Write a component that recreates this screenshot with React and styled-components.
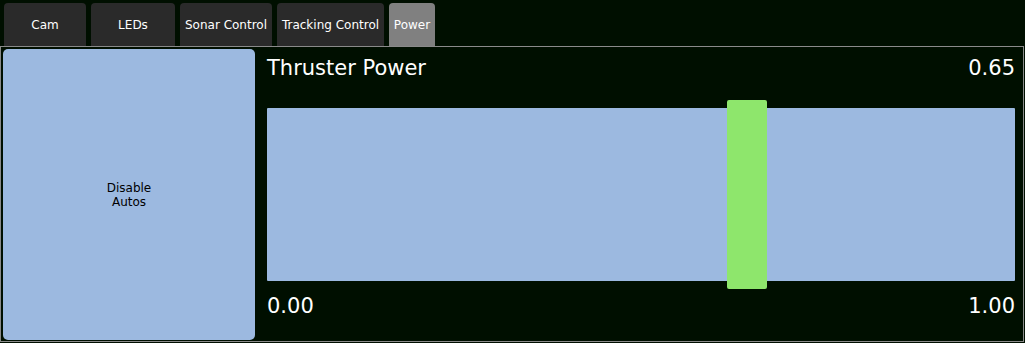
import React, { useState } from "react";
import styled, { createGlobalStyle } from "styled-components";

const GlobalStyle = createGlobalStyle`
  html, body {
    margin: 0;
    padding: 0;
    background: #000f00;
    font-family: "DejaVu Sans", "Liberation Sans", sans-serif;
  }
`;

const Page = styled.div`
  width: 1025px;
  height: 343px;
  display: flex;
  flex-direction: column;
  background: #000f00;
`;

const TabBar = styled.div`
  display: flex;
  gap: 5px;
  padding: 3px 0 0 4px;
  height: 43px;
`;

const Tab = styled.button`
  width: ${(p) => p.$width}px;
  height: 43px;
  border: 0;
  border-radius: 4px 4px 0 0;
  padding: 0 4px;
  background: ${(p) => (p.$active ? "#808080" : "#2a2a2a")};
  color: #ffffff;
  font-family: "DejaVu Sans", sans-serif;
  font-size: 12px;
  white-space: nowrap;
  cursor: pointer;
`;

const Panel = styled.div`
  width: 1024px;
  height: 296px;
  box-sizing: border-box;
  border: 1px solid #8a8a8a;
  padding: 2px;
  display: flex;
`;

const AutoButton = styled.button`
  width: 252px;
  height: 291px;
  border: 0;
  border-radius: 5px;
  background: #9cb9e0;
  color: #000;
  font-family: "DejaVu Sans", sans-serif;
  font-size: 12px;
  line-height: 14px;
  flex-shrink: 0;
`;

const Control = styled.div`
  flex: 1;
  display: flex;
  flex-direction: column;
  padding: 7px 6px 0 12px;
`;

const Row = styled.div`
  display: flex;
  justify-content: space-between;
  color: #ffffff;
  font-size: 21px;
  line-height: 24px;
  margin-top: ${(p) => p.$top || 0}px;
`;

const Slider = styled.div`
  position: relative;
  margin-top: 20px;
  height: 189px;
  display: flex;
  align-items: center;
`;

const Track = styled.div`
  width: 100%;
  height: 173px;
  background: #9cb9e0;
  border-radius: 1px;
`;

const Handle = styled.div`
  position: absolute;
  top: 0;
  width: 40px;
  height: 189px;
  background: #8ee66c;
  border-radius: 2px;
`;

const tabs = [
  { label: "Cam", width: 82 },
  { label: "LEDs", width: 84 },
  { label: "Sonar Control", width: 92 },
  { label: "Tracking Control", width: 107 },
  { label: "Power", width: 46 },
];

export default function App() {
  const [active, setActive] = useState("Power");
  const value = 0.65;

  return (
    <Page>
      <GlobalStyle />
      <TabBar>
        {tabs.map((t) => (
          <Tab
            key={t.label}
            $width={t.width}
            $active={active === t.label}
            onClick={() => setActive(t.label)}
          >
            {t.label}
          </Tab>
        ))}
      </TabBar>
      <Panel>
        <AutoButton>
          Disable
          <br />
          Autos
        </AutoButton>
        <Control>
          <Row>
            <span>Thruster Power</span>
            <span>{value.toFixed(2)}</span>
          </Row>
          <Slider>
            <Track />
            <Handle style={{ left: `calc((100% - 40px) * ${value})` }} />
          </Slider>
          <Row $top={5}>
            <span>0.00</span>
            <span>1.00</span>
          </Row>
        </Control>
      </Panel>
    </Page>
  );
}
